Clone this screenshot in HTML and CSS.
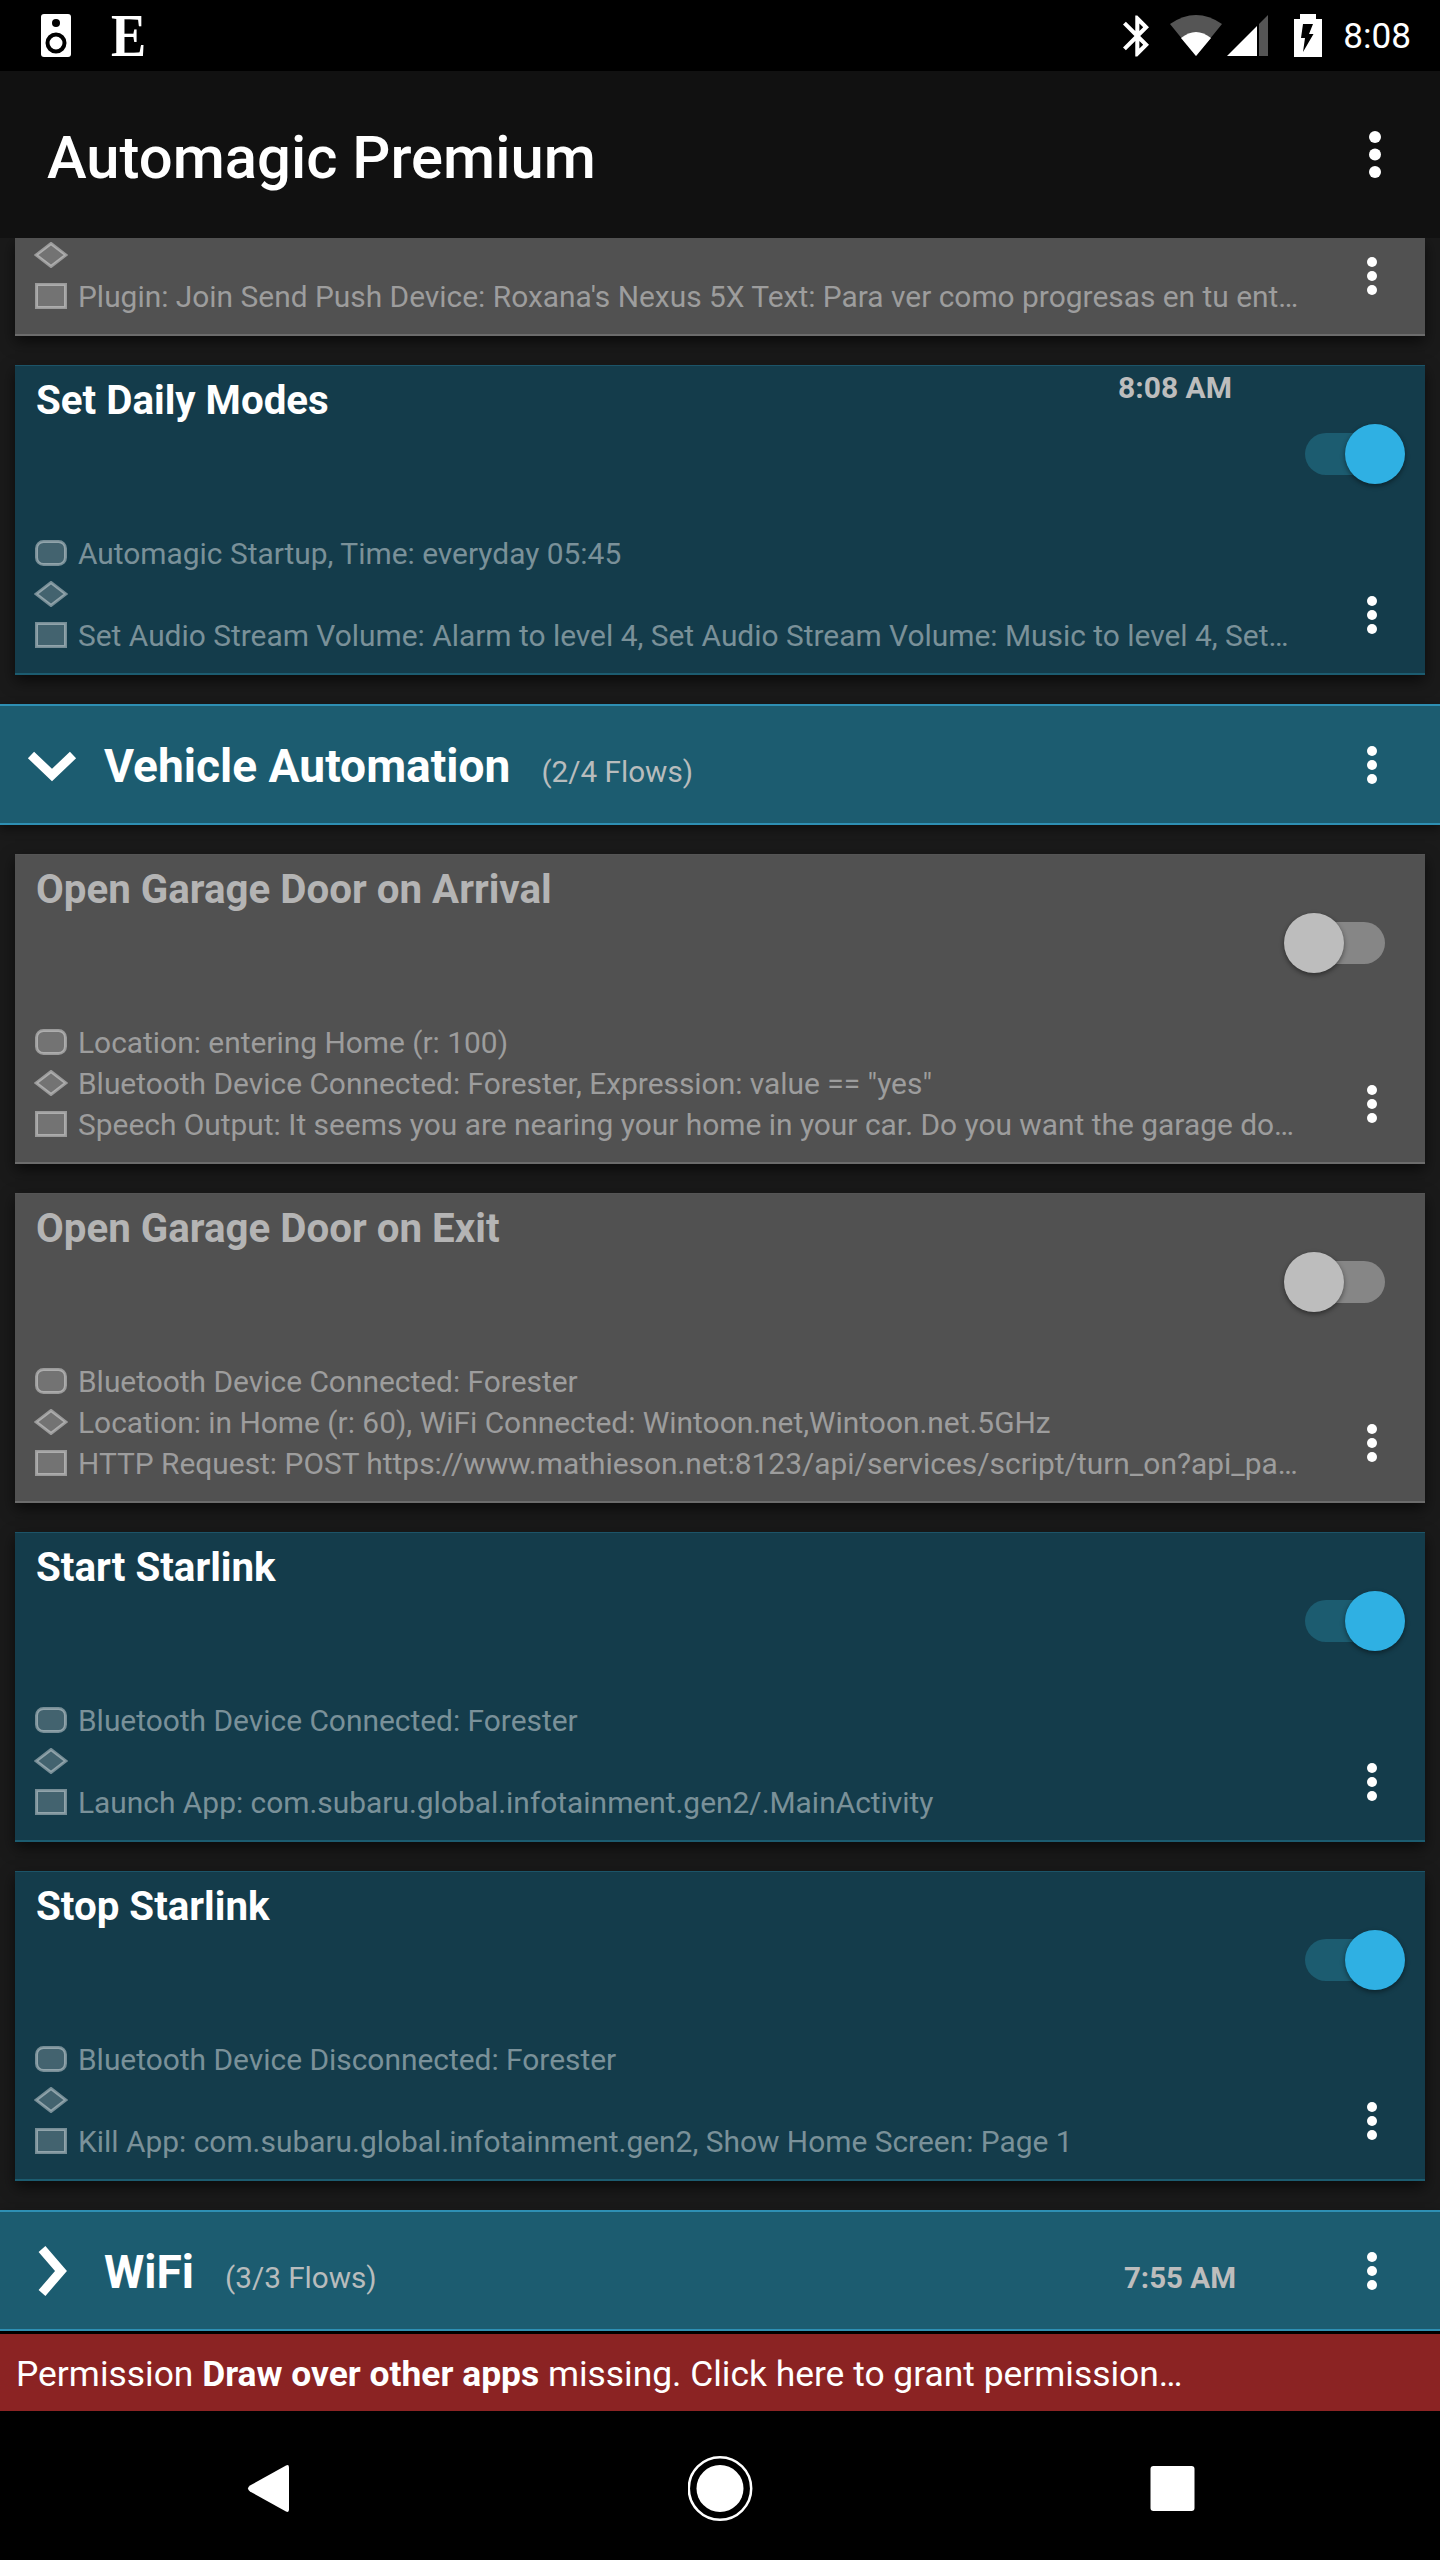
FILE: index.html
```html
<!DOCTYPE html>
<html lang="en">
<head>
    <meta charset="UTF-8">
    <title>Automagic Premium</title>
    <link rel="stylesheet" href="styles.css">
</head>
<body>
<svg class="defs" width="0" height="0">
    <symbol id="trigger" viewBox="0 0 34 26"><rect x="2.500" y="1.500" width="29" height="23" rx="7"/></symbol>
    <symbol id="condition" viewBox="0 0 34 26"><path d="M17 1.500L32 13 17 24.500 2 13z"/></symbol>
    <symbol id="action" viewBox="0 0 34 26"><rect x="2.500" y="1.500" width="29" height="23"/></symbol>
    <symbol id="dots" viewBox="0 0 10 38"><circle cx="5" cy="5" r="5"/><circle cx="5" cy="19" r="5"/><circle cx="5" cy="33" r="5"/></symbol>
</svg>

<div class="status">
    <svg class="speaker" width="30" height="43" viewBox="0 0 30 43">
        <rect width="30" height="43" rx="3" fill="#fff"/>
        <circle cx="15" cy="9" r="4" fill="#000"/>
        <circle cx="15" cy="29" r="8.500" fill="none" stroke="#000" stroke-width="4"/>
    </svg>
    <span class="status-e">E</span>
    <svg class="bluetooth" width="26" height="42" viewBox="5 2 12.71 20" fill="#fff">
        <path d="M17.710 7.710L12 2h-1v7.590L6.410 5 5 6.410 10.590 12 5 17.590 6.410 19 11 14.410V22h1l5.710-5.710-4.300-4.290 4.300-4.290zM13 5.830l1.880 1.880L13 9.590V5.830zm1.880 10.460L13 18.170v-3.760l1.880 1.880z"/>
    </svg>
    <svg class="wifi" width="52" height="42" viewBox="0 0 52 42">
        <path d="M0 9Q26 -9 52 9L26 41z" fill="#555"/>
        <path d="M11 23Q26 11 41 23L26 41z" fill="#fff"/>
    </svg>
    <svg class="signal" width="41" height="41" viewBox="0 0 41 41">
        <path d="M0 41L30 11V41z" fill="#fff"/>
        <path d="M32 9L41 0V41H32z" fill="#555"/>
    </svg>
    <svg class="battery" width="28" height="43" viewBox="0 0 28 43">
        <path fill="#fff" fill-rule="evenodd" d="M0 5H6V0H22V5H28V43H0zM9 10L7 24H11L9 38 19.500 20H15L19 10z"/>
    </svg>
    <span class="clock">8:08</span>
</div>

<div class="toolbar">
    <h1>Automagic Premium</h1>
    <svg class="toolbar-dots" width="12" height="47" viewBox="0 0 12 47" fill="#fff">
        <circle cx="6" cy="6" r="6"/><circle cx="6" cy="23.500" r="6"/><circle cx="6" cy="41" r="6"/>
    </svg>
</div>

<div class="list">
    <div class="card off scrolled">
        <div class="card-bottom">
            <div class="rows">
                <div class="row"><svg class="ico"><use href="#condition"/></svg></div>
                <div class="row"><svg class="ico"><use href="#action"/></svg><span>Plugin: Join Send Push Device: Roxana's Nexus 5X Text: Para ver como progresas en tu ent…</span></div>
            </div>
            <svg class="dots"><use href="#dots"/></svg>
        </div>
    </div>

    <div class="card on">
        <div class="card-top">
            <div class="title">Set Daily Modes</div>
            <div class="time">8:08 AM</div>
            <div class="toggle"><div class="thumb"></div></div>
        </div>
        <div class="card-bottom">
            <div class="rows">
                <div class="row"><svg class="ico"><use href="#trigger"/></svg><span>Automagic Startup, Time: everyday 05:45</span></div>
                <div class="row"><svg class="ico"><use href="#condition"/></svg></div>
                <div class="row"><svg class="ico"><use href="#action"/></svg><span>Set Audio Stream Volume: Alarm to level 4, Set Audio Stream Volume: Music to level 4, Set…</span></div>
            </div>
            <svg class="dots"><use href="#dots"/></svg>
        </div>
    </div>

    <div class="group">
        <svg class="chevron" width="104" height="60" viewBox="0 0 104 60"><path d="M31 20L52 40 73 20"/></svg>
        <span class="group-name">Vehicle Automation</span>
        <span class="group-count">(2/4 Flows)</span>
        <svg class="dots group-dots"><use href="#dots"/></svg>
    </div>

    <div class="card off">
        <div class="card-top">
            <div class="title">Open Garage Door on Arrival</div>
            <div class="toggle"><div class="thumb"></div></div>
        </div>
        <div class="card-bottom">
            <div class="rows">
                <div class="row"><svg class="ico"><use href="#trigger"/></svg><span>Location: entering Home (r: 100)</span></div>
                <div class="row"><svg class="ico"><use href="#condition"/></svg><span>Bluetooth Device Connected: Forester, Expression: value == "yes"</span></div>
                <div class="row"><svg class="ico"><use href="#action"/></svg><span>Speech Output: It seems you are nearing your home in your car. Do you want the garage do…</span></div>
            </div>
            <svg class="dots"><use href="#dots"/></svg>
        </div>
    </div>

    <div class="card off">
        <div class="card-top">
            <div class="title">Open Garage Door on Exit</div>
            <div class="toggle"><div class="thumb"></div></div>
        </div>
        <div class="card-bottom">
            <div class="rows">
                <div class="row"><svg class="ico"><use href="#trigger"/></svg><span>Bluetooth Device Connected: Forester</span></div>
                <div class="row"><svg class="ico"><use href="#condition"/></svg><span>Location: in Home (r: 60), WiFi Connected: Wintoon.net,Wintoon.net.5GHz</span></div>
                <div class="row"><svg class="ico"><use href="#action"/></svg><span>HTTP Request: POST https://www.mathieson.net:8123/api/services/script/turn_on?api_pa…</span></div>
            </div>
            <svg class="dots"><use href="#dots"/></svg>
        </div>
    </div>

    <div class="card on">
        <div class="card-top">
            <div class="title">Start Starlink</div>
            <div class="toggle"><div class="thumb"></div></div>
        </div>
        <div class="card-bottom">
            <div class="rows">
                <div class="row"><svg class="ico"><use href="#trigger"/></svg><span>Bluetooth Device Connected: Forester</span></div>
                <div class="row"><svg class="ico"><use href="#condition"/></svg></div>
                <div class="row"><svg class="ico"><use href="#action"/></svg><span>Launch App: com.subaru.global.infotainment.gen2/.MainActivity</span></div>
            </div>
            <svg class="dots"><use href="#dots"/></svg>
        </div>
    </div>

    <div class="card on">
        <div class="card-top">
            <div class="title">Stop Starlink</div>
            <div class="toggle"><div class="thumb"></div></div>
        </div>
        <div class="card-bottom">
            <div class="rows">
                <div class="row"><svg class="ico"><use href="#trigger"/></svg><span>Bluetooth Device Disconnected: Forester</span></div>
                <div class="row"><svg class="ico"><use href="#condition"/></svg></div>
                <div class="row"><svg class="ico"><use href="#action"/></svg><span>Kill App: com.subaru.global.infotainment.gen2, Show Home Screen: Page 1</span></div>
            </div>
            <svg class="dots"><use href="#dots"/></svg>
        </div>
    </div>

    <div class="group">
        <svg class="chevron" width="104" height="60" viewBox="0 0 104 60"><path d="M42 8L61 30 42 52"/></svg>
        <span class="group-name">WiFi</span>
        <span class="group-count">(3/3 Flows)</span>
        <span class="group-time">7:55 AM</span>
        <svg class="dots group-dots"><use href="#dots"/></svg>
    </div>
</div>

<div class="permission">Permission <b>Draw over other apps</b> missing. Click here to grant permission…</div>

<div class="nav">
    <svg width="65" height="65" viewBox="0 0 65 65"><path d="M15 29.500L51 9.500Q54 8 54 11.500V53.500Q54 57 51 55.500L15 35.500Q11 32.500 15 29.500z" fill="#fff"/></svg>
    <svg width="65" height="65" viewBox="0 0 65 65">
        <circle cx="32" cy="32.500" r="31.200" fill="none" stroke="#fff" stroke-width="2.500"/>
        <circle cx="32" cy="32.500" r="23.500" fill="#fff"/>
    </svg>
    <svg width="65" height="65" viewBox="0 0 65 65"><rect x="10.500" y="10" width="44" height="45" rx="3" fill="#fff"/></svg>
</div>
</body>
</html>
```
FILE: styles.css
```css
body {
    margin: 0;
    width: 1440px;
    height: 2560px;
    display: flex;
    flex-direction: column;
    background-color: #000;
    font-family: Roboto, "Liberation Sans", sans-serif;
    color: #fff;
    overflow: hidden;
}

.defs {
    position: absolute;
}

/* status bar */
.status {
    height: 71px;
    flex-shrink: 0;
    display: flex;
    align-items: center;
    padding: 0 29px 0 41px;
    background-color: #000;
}

.status-e {
    margin-left: 40px;
    font-family: "Liberation Serif", serif;
    font-size: 62px;
    font-weight: 700;
    line-height: 71px;
    transform: scaleX(0.85);
    transform-origin: left center;
}

.bluetooth {
    margin-left: auto;
}

.wifi {
    margin-left: 21px;
}

.signal {
    margin-left: 5px;
}

.battery {
    margin-left: 26px;
}

.clock {
    margin-left: 21px;
    font-size: 35.2px;
}

/* toolbar */
.toolbar {
    height: 167px;
    flex-shrink: 0;
    display: flex;
    align-items: center;
    justify-content: space-between;
    padding: 0 59px 0 47px;
    background-color: #111;
    box-sizing: border-box;
}

.toolbar h1 {
    margin: 6px 0 0 0;
    font-size: 59.8px;
    font-weight: 500;
}

/* flow list */
.list {
    height: 2093px;
    flex-shrink: 0;
    background-color: #1a1a1a;
    overflow: hidden;
}

.card {
    height: 310px;
    margin: 0 15px 29px 15px;
    padding: 0 20px 18px 20px;
    box-sizing: border-box;
    display: flex;
    flex-direction: column;
    box-shadow: 0 6px 14px rgba(0, 0, 0, 0.6);
}

.card.off {
    background-color: #515151;
    border-top: 1px solid #555;
    border-bottom: 2px solid #6c6c6c;
}

.card.on {
    background-color: #143c4b;
    border-top: 1px solid #1c5468;
    border-bottom: 2px solid #1c5c70;
}

.card.scrolled {
    height: 98px;
    border-top: none;
}

.card.scrolled .card-bottom {
    margin-top: -4px;
}

.card-top {
    display: flex;
}

.title {
    flex: 1;
    margin: 11px 0 0 1px;
    font-size: 40.3px;
    line-height: 48px;
    font-weight: 700;
}

.off .title {
    color: #b4b4b4;
}

.time {
    margin: 4px 52px 0 0;
    font-size: 30px;
    line-height: 35px;
    font-weight: 700;
    color: #bdbdbd;
}

.toggle {
    position: relative;
    width: 80px;
    height: 42px;
    margin: 67px 20px 0 21px;
    border-radius: 21px;
}

.on .toggle {
    background-color: #1c5c70;
}

.off .toggle {
    background-color: #868686;
}

.thumb {
    position: absolute;
    top: -9px;
    width: 60px;
    height: 60px;
    border-radius: 50%;
    box-shadow: 0 2px 5px rgba(0, 0, 0, 0.45);
}

.on .thumb {
    right: -20px;
    background-color: #2fb0e3;
}

.off .thumb {
    left: -21px;
    background-color: #bdbdbd;
}

.card-bottom {
    margin-top: auto;
    display: flex;
    align-items: flex-end;
}

.rows {
    flex: 1;
    min-width: 0;
}

.row {
    height: 41px;
    display: flex;
    align-items: center;
    gap: 10px;
    font-size: 29.9px;
    white-space: nowrap;
    color: rgba(255, 255, 255, 0.44);
}

.row span {
    padding-top: 2px;
}

.ico {
    width: 34px;
    height: 26px;
    flex-shrink: 0;
    margin-left: -1px;
    fill: rgba(255, 255, 255, 0.2);
    stroke: rgba(255, 255, 255, 0.42);
    stroke-width: 3;
}

.dots {
    width: 10px;
    height: 38px;
    flex-shrink: 0;
    fill: #fff;
    margin: 0 28px 21px 0;
}

/* group header */
.group {
    height: 121px;
    margin-bottom: 29px;
    box-sizing: border-box;
    display: flex;
    align-items: baseline;
    padding-top: 33px;
    background-color: #1c5c70;
    border-top: 2px solid #2e8fb3;
    border-bottom: 2px solid #2e8fb3;
    box-shadow: 0 4px 10px rgba(0, 0, 0, 0.45);
}

.chevron {
    align-self: center;
    margin-top: -33px;
    flex-shrink: 0;
    fill: none;
    stroke: #fff;
    stroke-width: 9;
}

.group-name {
    font-size: 46.1px;
    font-weight: 700;
}

.group-count {
    margin-left: 31px;
    font-size: 29.7px;
    color: #b8bcbd;
}

.group-time {
    margin-left: auto;
    font-size: 29.5px;
    font-weight: 700;
    color: #bdbdbd;
}

.group-dots {
    align-self: center;
    margin: -33px 63px 0 131px;
}

.group-count + .group-dots {
    margin-left: auto;
}

/* permission bar */
.permission {
    height: 77px;
    flex-shrink: 0;
    margin-top: 3px;
    padding: 4px 0 0 16px;
    box-sizing: border-box;
    background-color: #8b2323;
    font-size: 35.4px;
    line-height: 73px;
    white-space: pre;
}

/* nav bar */
.nav {
    flex: 1;
    display: flex;
    align-items: center;
    justify-content: space-between;
    padding: 6px 235px 0 235px;
}
```
